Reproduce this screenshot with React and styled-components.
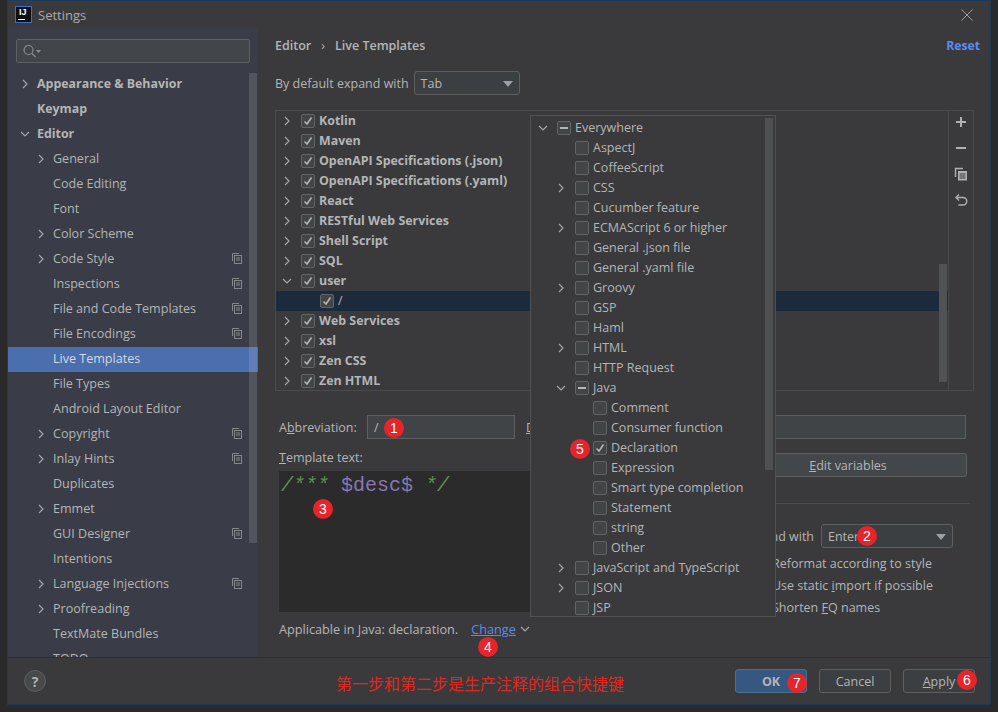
import React from 'react';
import styled, { createGlobalStyle } from 'styled-components';

const GlobalStyle = createGlobalStyle`
  html, body {
    margin: 0;
    padding: 0;
    background: #2a2a2b;
  }
  * {
    box-sizing: border-box;
  }
`;

const SIDEBAR = [
  { label: 'Appearance & Behavior', bold: true, arrow: 'right' },
  { label: 'Keymap', bold: true },
  { label: 'Editor', bold: true, arrow: 'down' },
  { label: 'General', arrow: 'right', sub: true },
  { label: 'Code Editing', sub: true },
  { label: 'Font', sub: true },
  { label: 'Color Scheme', arrow: 'right', sub: true },
  { label: 'Code Style', arrow: 'right', sub: true, copy: true },
  { label: 'Inspections', sub: true, copy: true },
  { label: 'File and Code Templates', sub: true, copy: true },
  { label: 'File Encodings', sub: true, copy: true },
  { label: 'Live Templates', sub: true, active: true },
  { label: 'File Types', sub: true },
  { label: 'Android Layout Editor', sub: true },
  { label: 'Copyright', arrow: 'right', sub: true, copy: true },
  { label: 'Inlay Hints', arrow: 'right', sub: true, copy: true },
  { label: 'Duplicates', sub: true },
  { label: 'Emmet', arrow: 'right', sub: true },
  { label: 'GUI Designer', sub: true, copy: true },
  { label: 'Intentions', sub: true },
  { label: 'Language Injections', arrow: 'right', sub: true, copy: true },
  { label: 'Proofreading', arrow: 'right', sub: true },
  { label: 'TextMate Bundles', sub: true },
  { label: 'TODO', sub: true },
];

const TEMPLATE_GROUPS = [
  { label: 'Kotlin', arrow: 'right' },
  { label: 'Maven', arrow: 'right' },
  { label: 'OpenAPI Specifications (.json)', arrow: 'right' },
  { label: 'OpenAPI Specifications (.yaml)', arrow: 'right' },
  { label: 'React', arrow: 'right' },
  { label: 'RESTful Web Services', arrow: 'right' },
  { label: 'Shell Script', arrow: 'right' },
  { label: 'SQL', arrow: 'right' },
  { label: 'user', arrow: 'down' },
  { label: '/', child: true },
  { label: 'Web Services', arrow: 'right' },
  { label: 'xsl', arrow: 'right' },
  { label: 'Zen CSS', arrow: 'right' },
  { label: 'Zen HTML', arrow: 'right' },
];

const CONTEXTS = [
  { label: 'Everywhere', level: 0, arrow: 'down', state: 'mixed' },
  { label: 'AspectJ', level: 1 },
  { label: 'CoffeeScript', level: 1 },
  { label: 'CSS', level: 1, arrow: 'right' },
  { label: 'Cucumber feature', level: 1 },
  { label: 'ECMAScript 6 or higher', level: 1, arrow: 'right' },
  { label: 'General .json file', level: 1 },
  { label: 'General .yaml file', level: 1 },
  { label: 'Groovy', level: 1, arrow: 'right' },
  { label: 'GSP', level: 1 },
  { label: 'Haml', level: 1 },
  { label: 'HTML', level: 1, arrow: 'right' },
  { label: 'HTTP Request', level: 1 },
  { label: 'Java', level: 1, arrow: 'down', state: 'mixed' },
  { label: 'Comment', level: 2 },
  { label: 'Consumer function', level: 2 },
  { label: 'Declaration', level: 2, state: 'checked' },
  { label: 'Expression', level: 2 },
  { label: 'Smart type completion', level: 2 },
  { label: 'Statement', level: 2 },
  { label: 'string', level: 2 },
  { label: 'Other', level: 2 },
  { label: 'JavaScript and TypeScript', level: 1, arrow: 'right' },
  { label: 'JSON', level: 1, arrow: 'right' },
  { label: 'JSP', level: 1 },
];

const BADGES = [
  { n: 1, x: 394, y: 428 },
  { n: 2, x: 867, y: 536 },
  { n: 3, x: 323, y: 509 },
  { n: 4, x: 488, y: 647 },
  { n: 5, x: 580, y: 449 },
  { n: 6, x: 967, y: 680 },
  { n: 7, x: 797, y: 683 },
];

const Chevron = ({ dir }) => (
  <ArrowSvg viewBox="0 0 10 10">
    <path
      d={dir === 'down' ? 'M1 3l4 4 4-4' : 'M3 1l4 4-4 4'}
      fill="none"
      stroke="#a3a5a8"
      strokeWidth="1.2"
    />
  </ArrowSvg>
);

const CheckBox = ({ state }) => (
  <Box>
    {state === 'checked' && (
      <svg width="12" height="12" viewBox="0 0 12 12">
        <path d="M2.500 6.500l2.500 2.500 4.500-6.500" fill="none" stroke="#b4b6b8" strokeWidth="1.6" />
      </svg>
    )}
    {state === 'mixed' && <Dash />}
  </Box>
);

const SearchIcon = () => (
  <svg width="24" height="14" viewBox="0 0 24 14">
    <circle cx="6.500" cy="6" r="4.500" fill="none" stroke="#8b8d90" strokeWidth="1.2" />
    <path d="M10 9.500l3.500 3.500" stroke="#8b8d90" strokeWidth="1.3" />
    <path d="M14 6h5l-2.500 3z" fill="#8b8d90" />
  </svg>
);

const CopyMark = () => (
  <CopySvg width="10" height="11" viewBox="0 0 10 11">
    <path d="M.500 8V.500H7" fill="none" stroke="#85878a" />
    <rect x="2.500" y="2.500" width="7" height="8" fill="none" stroke="#85878a" />
    <path d="M4 5h4M4 7h4" stroke="#85878a" />
  </CopySvg>
);

const ToolIcons = () => (
  <>
    <svg width="14" height="14" viewBox="0 0 14 14">
      <path d="M7 2v10M2 7h10" stroke="#afb1b3" strokeWidth="2" />
    </svg>
    <svg width="14" height="14" viewBox="0 0 14 14">
      <path d="M2 7h10" stroke="#afb1b3" strokeWidth="2" />
    </svg>
    <svg width="14" height="14" viewBox="0 0 14 14">
      <path d="M1.500 10V1.500H9" fill="none" stroke="#afb1b3" strokeWidth="1.400" />
      <path d="M4 4h9v9.500H4z" fill="#afb1b3" />
      <path d="M5.500 7h6M5.500 9h6M5.500 11h6" stroke="#3a3a3c" />
    </svg>
    <svg width="14" height="14" viewBox="0 0 14 14">
      <path d="M5 1.500L2 4.500l3 3" fill="none" stroke="#afb1b3" strokeWidth="1.400" />
      <path d="M2.500 4.500H9a3.400 3.400 0 010 7.500H4.500" fill="none" stroke="#afb1b3" strokeWidth="1.400" />
    </svg>
  </>
);

const App = () => (
  <>
    <GlobalStyle />
    <Screen>
      <Dialog>
        <TitleBar>
          <Logo>
            IJ
            <LogoBar />
          </Logo>
          <TitleText>Settings</TitleText>
          <CloseIcon width="12" height="12" viewBox="0 0 12 12">
            <path d="M.500.500l11 11M11.500.500l-11 11" stroke="#9a9c9e" strokeWidth="1" />
          </CloseIcon>
        </TitleBar>

        <Body>
          <Sidebar>
            <SearchField>
              <SearchIcon />
            </SearchField>
            <NavList>
              {SIDEBAR.map((item) => (
                <NavItem key={item.label} $active={item.active} $sub={item.sub} $bold={item.bold}>
                  <NavArrow>{item.arrow && <Chevron dir={item.arrow} />}</NavArrow>
                  {item.label}
                  {item.copy && <CopyMark />}
                </NavItem>
              ))}
            </NavList>
            <SideScroll />
          </Sidebar>

          <Content>
            <Header>
              <Crumbs>
                Editor
                <CrumbSep>›</CrumbSep>
                Live Templates
              </Crumbs>
              <ResetLink>Reset</ResetLink>
            </Header>

            <ExpandRow>
              By default expand with
              <Select $width={106}>
                Tab
                <Caret />
              </Select>
            </ExpandRow>

            <TreePanel>
              <Tree>
                {TEMPLATE_GROUPS.map((row) => (
                  <TreeRow key={row.label} $selected={row.child}>
                    <TreeArrow $child={row.child}>{row.arrow && <Chevron dir={row.arrow} />}</TreeArrow>
                    <CheckBox state="checked" />
                    <TreeLabel $child={row.child}>{row.label}</TreeLabel>
                  </TreeRow>
                ))}
                <TreeScroll />
              </Tree>
              <Tools>
                <ToolIcons />
              </Tools>
            </TreePanel>

            <Form>
              <AbbrevRow>
                <FieldLabel $width={88}>
                  A<u>b</u>breviation:
                </FieldLabel>
                <TextField $width={148}>/</TextField>
                <FieldLabel $width={0} $gap={11}>
                  <u>D</u>escription:
                </FieldLabel>
                <TextField $grow />
              </AbbrevRow>

              <EditorRow>
                <EditorColumn>
                  <TemplateLabel>
                    <u>T</u>emplate text:
                  </TemplateLabel>
                  <CodeArea>
                    <Comment>/***</Comment> <Variable>$desc$</Variable> <Comment>*/</Comment>
                  </CodeArea>
                </EditorColumn>
                <OptionsColumn>
                  <WideButton>
                    <span>
                      <u>E</u>dit variables
                    </span>
                  </WideButton>
                  <Divider />
                  <ExpandWith>
                    Expand with
                    <Select $width={132}>
                      Enter
                      <Caret />
                    </Select>
                  </ExpandWith>
                  <OptionRow>
                    <CheckBox state="checked" />
                    <span>Reformat according to style</span>
                  </OptionRow>
                  <OptionRow>
                    <CheckBox />
                    <span>
                      Use static <u>i</u>mport if possible
                    </span>
                  </OptionRow>
                  <OptionRow>
                    <CheckBox state="checked" />
                    <span>
                      Shorten <u>F</u>Q names
                    </span>
                  </OptionRow>
                </OptionsColumn>
              </EditorRow>

              <ApplicableRow>
                Applicable in Java: declaration.
                <ChangeLink>Change</ChangeLink>
                <LinkArrow>
                  <Chevron dir="down" />
                </LinkArrow>
              </ApplicableRow>
            </Form>
          </Content>
        </Body>

        <Footer>
          <HelpButton>?</HelpButton>
          <Note>第一步和第二步是生产注释的组合快捷键</Note>
          <FooterButtons>
            <DialogButton $primary>OK</DialogButton>
            <DialogButton>Cancel</DialogButton>
            <DialogButton>
              <span>
                <u>A</u>pply
              </span>
            </DialogButton>
          </FooterButtons>
        </Footer>
      </Dialog>

      <ContextPopup>
        {CONTEXTS.map((row) => (
          <PopupRow key={row.label} $level={row.level}>
            <PopupArrow>{row.arrow && <Chevron dir={row.arrow} />}</PopupArrow>
            <CheckBox state={row.state} />
            <PopupLabel>{row.label}</PopupLabel>
          </PopupRow>
        ))}
        <PopupScroll />
      </ContextPopup>

      {BADGES.map((b) => (
        <Badge key={b.n} style={{ left: b.x - 10, top: b.y - 10 }}>
          {b.n}
        </Badge>
      ))}
    </Screen>
  </>
);

export default App;

const FONT = `"Open Sans", "Noto Sans", "Noto Sans CJK SC", sans-serif`;

const Screen = styled.div`
  position: relative;
  width: 998px;
  height: 712px;
  overflow: hidden;
  padding-left: 7px;
  background: #2a2a2b;
  font-family: ${FONT};
  font-size: 12.5px;
  color: #b4b5b6;
`;

const Dialog = styled.div`
  display: flex;
  flex-direction: column;
  width: 984px;
  height: 705px;
  background: #3a3a3c;
  border: 1px solid #1d3a5c;
`;

const TitleBar = styled.div`
  display: flex;
  align-items: center;
  height: 27px;
  padding: 0 17px 0 7px;
  flex-shrink: 0;
`;

const Logo = styled.div`
  position: relative;
  width: 17px;
  height: 17px;
  padding-left: 3px;
  background: #101010;
  border: 1px solid #2f6fe0;
  color: #fff;
  font-family: "Liberation Sans", sans-serif;
  font-size: 9px;
  font-weight: 700;
  line-height: 10px;
`;

const LogoBar = styled.div`
  position: absolute;
  left: 2px;
  bottom: 2px;
  width: 7px;
  height: 1px;
  background: #fff;
`;

const TitleText = styled.span`
  margin-left: 6px;
  flex: 1;
  color: #a9aaab;
  font-size: 13px;
`;

const CloseIcon = styled.svg`
  display: block;
`;

const Body = styled.div`
  display: flex;
  flex: 1;
  min-height: 0;
`;

const Sidebar = styled.div`
  position: relative;
  display: flex;
  flex-direction: column;
  width: 250px;
  flex-shrink: 0;
  padding-top: 11px;
  background: #3a3d47;
  overflow: hidden;
`;

const SearchField = styled.div`
  display: flex;
  align-items: center;
  flex-shrink: 0;
  height: 24px;
  margin: 0 8px 9px 8px;
  padding-left: 5px;
  background: #42464a;
  border: 1px solid #5e6163;
  border-radius: 2px;
`;

const NavList = styled.div`
  flex: 1;
  overflow: hidden;
`;

const NavItem = styled.div`
  position: relative;
  display: flex;
  align-items: center;
  height: 25px;
  padding-left: ${({ $sub }) => ($sub ? 28 : 12)}px;
  padding-bottom: 2px;
  background: ${({ $active }) => ($active ? '#4b6eaf' : 'transparent')};
  color: ${({ $active }) => ($active ? '#d6d8dc' : '#b4b5b6')};
  font-size: ${({ $bold }) => ($bold ? '12.4px' : '12.55px')};
  font-weight: ${({ $bold }) => ($bold ? 700 : 400)};
`;

const NavArrow = styled.span`
  display: flex;
  width: 17px;
`;

const ArrowSvg = styled.svg`
  display: block;
  width: 10px;
  height: 10px;
`;

const CopySvg = styled.svg`
  position: absolute;
  left: 224px;
  top: 6px;
`;

const SideScroll = styled.div`
  position: absolute;
  right: 1px;
  top: 45px;
  width: 8px;
  height: 470px;
  background: rgba(255, 255, 255, 0.12);
`;

const Content = styled.div`
  flex: 1;
  min-width: 0;
  padding: 0 10px 0 17px;
`;

const Header = styled.div`
  display: flex;
  align-items: center;
  justify-content: space-between;
  height: 34px;
`;

const Crumbs = styled.div`
  font-weight: 600;
`;

const CrumbSep = styled.span`
  margin: 0 10px;
  font-weight: 400;
`;

const ResetLink = styled.span`
  color: #5a8cf0;
  font-size: 12.2px;
  font-weight: 700;
`;

const ExpandRow = styled.div`
  display: flex;
  align-items: center;
  gap: 5px;
  height: 24px;
  margin-top: 9px;
`;

const Select = styled.div`
  position: relative;
  display: flex;
  align-items: center;
  flex-shrink: 0;
  width: ${({ $width }) => $width}px;
  height: 24px;
  padding-left: 6px;
  background: #3c3f41;
  border: 1px solid #5e6060;
  border-radius: 3px;
`;

const Caret = styled.span`
  position: absolute;
  right: 6px;
  top: 9px;
  border-left: 5px solid transparent;
  border-right: 5px solid transparent;
  border-top: 6px solid #9da0a3;
`;

const TreePanel = styled.div`
  display: flex;
  height: 281px;
  margin: 15px 6px 0 0;
  border: 1px solid #4a4a4c;
`;

const Tree = styled.div`
  position: relative;
  flex: 1;
  overflow: hidden;
`;

const TreeRow = styled.div`
  display: flex;
  align-items: center;
  height: 20px;
  background: ${({ $selected }) => ($selected ? '#1b2b3c' : 'transparent')};
`;

const TreeArrow = styled.span`
  display: flex;
  width: ${({ $child }) => ($child ? 44 : 25)}px;
  padding-left: 6px;
`;

const TreeLabel = styled.span`
  margin-left: 4px;
  padding-bottom: 2px;
  font-size: 12.4px;
  font-weight: ${({ $child }) => ($child ? 400 : 700)};
`;

const TreeScroll = styled.div`
  position: absolute;
  right: 1px;
  top: 153px;
  width: 8px;
  height: 118px;
  background: #515254;
`;

const Box = styled.span`
  display: inline-flex;
  align-items: center;
  justify-content: center;
  flex-shrink: 0;
  width: 14px;
  height: 14px;
  background: #424446;
  border: 1px solid #626466;
  border-radius: 2px;
`;

const Dash = styled.span`
  width: 8px;
  height: 2px;
  background: #b4b6b8;
`;

const Tools = styled.div`
  display: flex;
  flex-direction: column;
  align-items: center;
  gap: 12px;
  width: 25px;
  padding-top: 4px;
  border-left: 1px solid #4a4a4c;
`;

const Form = styled.div`
  margin-top: 24px;
  padding-left: 4px;
`;

const AbbrevRow = styled.div`
  display: flex;
  align-items: center;
  height: 24px;
  margin-right: 14px;
`;

const FieldLabel = styled.span`
  flex-shrink: 0;
  width: ${({ $width }) => $width}px;
  margin-left: ${({ $gap }) => $gap || 0}px;
  white-space: nowrap;
`;

const TextField = styled.div`
  display: flex;
  align-items: center;
  width: ${({ $width }) => ($width ? `${$width}px` : 'auto')};
  flex: ${({ $grow }) => ($grow ? 1 : 'none')};
  margin-left: ${({ $grow }) => ($grow ? '80px' : '0')};
  height: 24px;
  padding-left: 6px;
  background: #414446;
  border: 1px solid #5e6060;
`;

const EditorRow = styled.div`
  display: flex;
  height: 163px;
  margin-top: 10px;
`;

const EditorColumn = styled.div`
  width: 460px;
  flex-shrink: 0;
`;

const TemplateLabel = styled.div`
  height: 18px;
  margin-bottom: 4px;
  line-height: 18px;
`;

const CodeArea = styled.pre`
  height: 141px;
  margin: 0;
  padding: 3px 2px;
  background: #2b2b2b;
  font-family: "Liberation Mono", monospace;
  font-size: 20px;
  line-height: 24px;
`;

const Comment = styled.i`
  color: #5f8f52;
`;

const Variable = styled.span`
  color: #8777b5;
`;

const OptionsColumn = styled.div`
  flex: 1;
  min-width: 0;
  padding: 4px 13px 0 6px;
`;

const WideButton = styled.div`
  display: flex;
  align-items: center;
  justify-content: center;
  height: 24px;
  padding-right: 16px;
  background: #43474a;
  border: 1px solid #5e6060;
  border-radius: 3px;
`;

const Divider = styled.div`
  height: 1px;
  margin: 26px -3px 20px 0;
  background: #4c4c4e;
`;

const ExpandWith = styled.div`
  display: flex;
  align-items: center;
  justify-content: flex-end;
  gap: 7px;
  height: 24px;
  margin: 0 14px 4px 0;
  white-space: nowrap;
`;

const OptionRow = styled.div`
  display: flex;
  align-items: center;
  gap: 7px;
  height: 22px;
  padding-left: 6px;
  white-space: nowrap;
`;

const ApplicableRow = styled.div`
  display: flex;
  align-items: center;
  height: 18px;
  margin-top: 8px;
  font-size: 12.7px;
`;

const ChangeLink = styled.span`
  margin-left: 13px;
  color: #5a8cf0;
  text-decoration: underline;
`;

const LinkArrow = styled.span`
  margin-left: 4px;
`;

const Footer = styled.div`
  position: relative;
  display: flex;
  align-items: center;
  justify-content: space-between;
  height: 47px;
  flex-shrink: 0;
  padding: 0 15px 0 16px;
  background: #3a3a3c;
  border-top: 1px solid #2f2f30;
`;

const HelpButton = styled.div`
  display: flex;
  align-items: center;
  justify-content: center;
  width: 22px;
  height: 22px;
  background: #47494b;
  border: 1px solid #5e6060;
  border-radius: 50%;
  font-weight: 700;
  font-size: 14px;
`;

const Note = styled.span`
  position: absolute;
  left: 328px;
  top: 15px;
  color: #e0281e;
  font-size: 16px;
  line-height: 22px;
`;

const FooterButtons = styled.div`
  display: flex;
  gap: 12px;
`;

const DialogButton = styled.div`
  display: flex;
  align-items: center;
  justify-content: center;
  width: 72px;
  height: 24px;
  background: ${({ $primary }) => ($primary ? '#365880' : '#3c3f41')};
  border: 1px solid ${({ $primary }) => ($primary ? '#4c708c' : '#5e6060')};
  border-radius: 3px;
  font-weight: ${({ $primary }) => ($primary ? 700 : 400)};
`;

const ContextPopup = styled.div`
  position: absolute;
  left: 530px;
  top: 115px;
  width: 246px;
  height: 502px;
  padding-top: 2px;
  background: #3a3a3c;
  border: 1px solid #515153;
  overflow: hidden;
`;

const PopupRow = styled.div`
  display: flex;
  align-items: center;
  height: 20px;
  padding-left: ${({ $level }) => 7 + $level * 18}px;
`;

const PopupArrow = styled.span`
  display: flex;
  width: 19px;
`;

const PopupLabel = styled.span`
  margin-left: 4px;
  padding-bottom: 2px;
`;

const PopupScroll = styled.div`
  position: absolute;
  right: 2px;
  top: 2px;
  width: 8px;
  height: 352px;
  background: #4f5052;
`;

const Badge = styled.div`
  position: absolute;
  display: flex;
  align-items: center;
  justify-content: center;
  width: 20px;
  height: 20px;
  background: #e6242b;
  border-radius: 50%;
  color: #fff;
  font-size: 14px;
  font-family: "Liberation Sans", sans-serif;
`;
